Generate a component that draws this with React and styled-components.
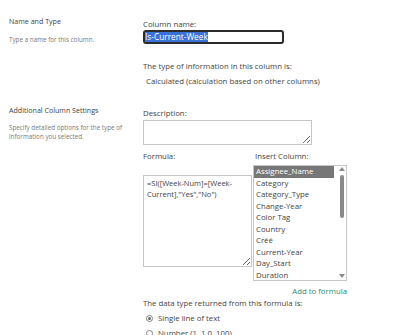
import React from "react";
import styled, { createGlobalStyle } from "styled-components";

const Global = createGlobalStyle`
  html, body { margin: 0; padding: 0; background: #fff; }
  body { font-family: "Open Sans", "Noto Sans", sans-serif; color: #444; }
  * { box-sizing: border-box; }
`;

const Page = styled.div`
  width: 400px;
  height: 335px;
  overflow: hidden;
  padding-left: 9px;
`;

const Section = styled.section`
  display: grid;
  grid-template-columns: 134px 1fr;
  padding-top: ${(p) => p.$top}px;
`;

const Aside = styled.div`
  display: flex;
  flex-direction: column;
`;

const Heading = styled.h3`
  margin: 0;
  font-size: 7.1px;
  line-height: 10px;
  font-weight: 400;
  color: #444;
  white-space: nowrap;
`;

const Hint = styled.p`
  margin: ${(p) => p.$mt}px 0 0;
  font-size: 6.3px;
  line-height: 9px;
  color: #7a7a7a;
  width: 128px;
`;

const Main = styled.div`
  display: flex;
  flex-direction: column;
  align-items: flex-start;
  padding-top: ${(p) => p.$pad}px;
`;

const Label = styled.div`
  font-size: 7.8px;
  line-height: 11px;
  color: #444;
  white-space: nowrap;
  margin-top: ${(p) => p.$mt || 0}px;
  padding-left: ${(p) => p.$indent || 0}px;
`;

const NameField = styled.div`
  margin-top: 0.5px;
  width: 141px;
  height: 14px;
  border: 2px solid #2b2b2b;
  border-radius: 3px;
  font-size: 8.3px;
  line-height: 10px;
  white-space: nowrap;
  overflow: hidden;
  color: #222;
`;

const Selection = styled.span`
  background: #3a72d6;
  color: #fff;
`;

const Misspelled = styled.span`
  text-decoration: underline wavy #e02b2b;
  text-decoration-thickness: 1px;
  text-underline-offset: 1px;
`;

const TextArea = styled.textarea`
  display: block;
  margin: ${(p) => p.$mt}px 0 0;
  width: ${(p) => p.$w}px;
  height: ${(p) => p.$h}px;
  border: 1px solid #c6c6c6;
  border-radius: 0;
  padding: 1.5px 3px;
  font-family: "Open Sans", "Noto Sans", sans-serif;
  font-size: 7.5px;
  line-height: 11px;
  color: #444;
  background: #fff;
  outline: none;
  overflow: hidden;
`;

const FormulaGrid = styled.div`
  margin-top: 5.5px;
  display: grid;
  grid-template-columns: 110px 94px;
`;

const Column = styled.div`
  display: flex;
  flex-direction: column;
`;

const ListBox = styled.div`
  margin-top: 3.5px;
  height: 116px;
  border: 1px solid #c6c6c6;
  display: flex;
  overflow: hidden;
`;

const Options = styled.ul`
  list-style: none;
  margin: 0;
  padding: 0;
  flex: 1;
  overflow: hidden;
`;

const Option = styled.li`
  font-size: 7.8px;
  line-height: 11.5px;
  padding-left: 2px;
  white-space: nowrap;
  color: ${(p) => (p.$selected ? "#fff" : "#444")};
  background: ${(p) => (p.$selected ? "#777" : "transparent")};
`;

const ScrollBar = styled.div`
  width: 12px;
  padding-left: 4px;
  display: flex;
  flex-direction: column;
  align-items: center;
  padding-top: 1px;
  padding-bottom: 2px;
`;

const Thumb = styled.div`
  margin-top: 4px;
  width: 3.5px;
  height: 43px;
  border-radius: 2px;
  background: #8a8a8a;
`;

const Spacer = styled.div`
  flex: 1;
`;

const Arrow = ({ down }) => (
  <svg width="6" height="4" viewBox="0 0 6 4">
    <polygon points={down ? "0,0 6,0 3,4" : "0,4 6,4 3,0"} fill="#8a8a8a" />
  </svg>
);

const ActionRow = styled.div`
  width: 204px;
  display: flex;
  justify-content: flex-end;
  margin-top: 4.5px;
`;

const Link = styled.a`
  font-size: 7.8px;
  line-height: 11px;
  color: #2b8a6e;
  text-decoration: none;
  white-space: nowrap;
`;

const RadioRow = styled.label`
  display: flex;
  align-items: center;
  gap: 5.5px;
  margin-top: 4px;
  padding-left: 2.5px;
  font-size: 7.8px;
  line-height: 11px;
  color: #444;
  white-space: nowrap;
`;

const RadioDot = styled.span`
  width: 7px;
  height: 7px;
  border-radius: 50%;
  border: 1px solid #808080;
  display: grid;
  place-items: center;
  &::after {
    content: "";
    width: 3px;
    height: 3px;
    border-radius: 50%;
    background: ${(p) => (p.$checked ? "#666" : "transparent")};
  }
`;

const columns = [
  "Assignee_Name",
  "Category",
  "Category_Type",
  "Change-Year",
  "Color Tag",
  "Country",
  "Créé",
  "Current-Year",
  "Day_Start",
  "Duration",
];

export default function App() {
  return (
    <>
      <Global />
      <Page>
        <Section $top={16}>
          <Aside>
            <Heading>Name and Type</Heading>
            <Hint $mt={8.5}>Type a name for this column.</Hint>
          </Aside>
          <Main $pad={2.5}>
            <Label>Column name:</Label>
            <NameField role="textbox">
              <Selection>
                Is-<Misspelled>Current</Misspelled>-Week
              </Selection>
            </NameField>
            <Label $mt={16.5}>The type of information in this column is:</Label>
            <Label $mt={4} $indent={3}>
              Calculated (calculation based on other columns)
            </Label>
          </Main>
        </Section>
        <Section $top={18}>
          <Aside>
            <Heading>Additional Column Settings</Heading>
            <Hint $mt={8}>
              Specify detailed options for the type of information you selected.
            </Hint>
          </Aside>
          <Main $pad={3}>
            <Label>Description:</Label>
            <TextArea $mt={1.5} $w={169} $h={25} defaultValue="" />
            <FormulaGrid>
              <Column>
                <Label>Formula:</Label>
                <TextArea
                  $mt={13.5}
                  $w={109}
                  $h={92}
                  defaultValue={'=SI([Week-Num]=[Week-Current],"Yes","No")'}
                />
              </Column>
              <Column>
                <Label $indent={2}>Insert Column:</Label>
                <ListBox>
                  <Options>
                    {columns.map((c, i) => (
                      <Option key={c} $selected={i === 0}>
                        {c}
                      </Option>
                    ))}
                  </Options>
                  <ScrollBar>
                    <Arrow />
                    <Thumb />
                    <Spacer />
                    <Arrow down />
                  </ScrollBar>
                </ListBox>
              </Column>
            </FormulaGrid>
            <ActionRow>
              <Link href="#">Add to formula</Link>
            </ActionRow>
            <Label $mt={1}>The data type returned from this formula is:</Label>
            <RadioRow>
              <RadioDot $checked />
              Single line of text
            </RadioRow>
            <RadioRow>
              <RadioDot />
              Number (1, 1.0, 100)
            </RadioRow>
          </Main>
        </Section>
      </Page>
    </>
  );
}
